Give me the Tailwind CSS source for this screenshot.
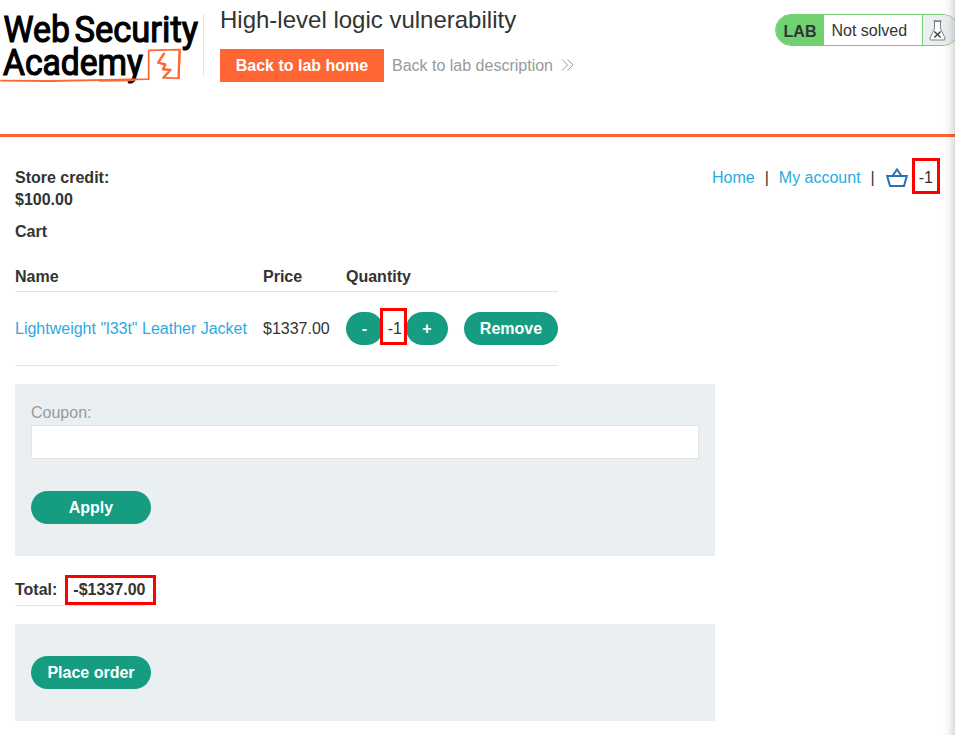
<!DOCTYPE html>
<html lang="en">
<head>
<meta charset="utf-8">
<title>High-level logic vulnerability</title>
<script src="https://cdn.jsdelivr.net/npm/@tailwindcss/browser@4"></script>
</head>
<body class="relative h-[735px] w-[955px] overflow-hidden bg-white font-['Liberation_Sans',Arial,sans-serif] text-base leading-[22px] text-[#333332]">
<header class="flex h-[137px] items-start border-b-[3px] border-[#ff6633]">
  <svg class="block h-[90px] w-[203px] shrink-0 overflow-visible" viewBox="0 0 203 90" role="img" aria-label="Web Security Academy">
    <g font-family="Roboto, sans-serif" font-weight="400" font-size="37.500" fill="#000" stroke="#000" stroke-width="1.200">
      <text x="3.500" y="42.300" textLength="66.500" lengthAdjust="spacingAndGlyphs">Web</text>
      <text x="74.500" y="42.300" textLength="123.500" lengthAdjust="spacingAndGlyphs">Security</text>
      <text x="3" y="74.500" font-size="36" textLength="140" lengthAdjust="spacingAndGlyphs">Academy</text>
    </g>
    <g fill="none" stroke="#ff6633" stroke-linejoin="round" stroke-linecap="round" stroke-width="1.800">
      <path d="M1 80.600L50 81L148.700 79.200L148.700 50.300L180 49.700L178.700 78.300L163.300 77.700"/>
      <path d="M179.500 50L178.500 78" stroke-width="2.200"/>
      <path d="M164 53.700L158.200 62.700L165.300 64.500L163 69.300L170.500 70L163.300 77.700" stroke-width="2.400"/>
      <path d="M100 80.500L133 80" stroke-width="2.600"/>
    </g>
  </svg>
  <div class="mt-3.5 h-[62px] w-px shrink-0 bg-[#e4e4e4]"></div>
  <div class="ml-4 flex-1 pt-1.5">
    <h1 class="text-2xl leading-7">High-level logic vulnerability</h1>
    <div class="mt-[15px] flex items-center">
      <a class="flex h-[33px] w-[164px] items-center justify-center bg-[#ff6633] font-bold text-white">Back to lab home</a>
      <a class="ml-2 flex items-center text-[#999]">Back to lab description
        <svg class="mb-px ml-2 h-3 w-3.5" viewBox="0 0 14 12" fill="none" stroke="#999" stroke-width="1"><path d="M1 .5L6.500 6L1 11.500M6.500 .5L12 6L6.500 11.500"/></svg>
      </a>
    </div>
  </div>
  <div class="-mr-1 mt-3.5 flex h-8 w-[184px] shrink-0 overflow-hidden rounded-full border border-[#6fd16f] bg-white">
    <div class="flex w-12 shrink-0 items-center justify-center bg-[#6fd16f] pt-[3px] font-bold">LAB</div>
    <div class="flex w-[99px] shrink-0 items-center border-r border-[#6fd16f] pl-[7.5px] pt-0.5">Not solved</div>
    <div class="flex flex-1 items-center bg-[#eaeff2] pl-1.5">
      <svg class="h-[21px] w-[17px] shrink-0" viewBox="0 0 17 21" fill="#fff" stroke="#808080" stroke-width="1"><path d="M5.500 1.500V8.500L1 18Q.5 20 2 20H15Q16.500 20 16 18L11.500 8.500V1.500Z"/><path d="M4.500 1H12.500" stroke-width="1.300"/><path d="M5.300 11.500L11.700 17.500M11.700 11.500L5.300 17.500" stroke="#444" stroke-width="1.600"/></svg>
    </div>
  </div>
</header>
<main class="px-[15px] pt-[30px]">
  <div class="flex items-start justify-between">
    <p class="w-28 font-bold">Store credit:<br>$100.00</p>
    <nav class="flex items-center pr-[7px]">
      <a class="text-[#29abe2]">Home</a><span class="ml-2.5">|</span>
      <a class="ml-2.5 text-[#29abe2]">My account</a><span class="ml-2.5">|</span>
      <svg class="ml-[11px] h-5 w-[22px]" viewBox="0 0 22 20" fill="none" stroke="#2b70b5" stroke-width="2"><path d="M1.200 8H20.800L18 18H4Z"/><path d="M6.500 8L11 1.500L15.500 8"/></svg>
      <span class="relative ml-[11px]">-1<span class="absolute -left-[7px] -top-[9px] h-[35.5px] w-7 border-3 border-[#ff0000]"></span></span>
    </nav>
  </div>
  <h2 class="mt-2.5 font-bold">Cart</h2>
  <section class="mt-[23px] w-[543px]">
    <div class="grid h-[26px] grid-cols-[232px_67px_212px] gap-x-4 border-b border-[#e4e4e4] font-bold">
      <div>Name</div><div>Price</div><div>Quantity</div>
    </div>
    <div class="grid h-[74px] grid-cols-[232px_67px_212px] items-center gap-x-4 border-b border-[#e4e4e4]">
      <a class="whitespace-nowrap text-[#29abe2]">Lightweight "l33t" Leather Jacket</a>
      <div>$1337.00</div>
      <div class="flex items-center">
        <button class="h-[33px] w-[37px] rounded-full bg-[#169c80] font-bold text-white">-</button>
        <span class="relative ml-[4.7px] w-[15px]">-1<span class="absolute -left-[7.7px] -top-2.5 h-[37px] w-[27px] border-3 border-[#ff0000]"></span></span>
        <button class="ml-[3.3px] h-[33px] w-[42px] rounded-full bg-[#169c80] font-bold text-white">+</button>
        <button class="ml-4 h-[33px] w-[94px] rounded-full bg-[#169c80] font-bold text-white">Remove</button>
      </div>
    </div>
  </section>
  <form class="mt-[18px] h-[172px] w-[700px] bg-[#eaeff2] px-4 pt-[18px]">
    <label class="block text-[#999]">Coupon:</label>
    <input class="mt-px block h-[34px] w-full border border-[#e4e4e4] bg-white">
    <button type="button" class="mt-8 h-[33px] w-[120px] rounded-full bg-[#169c80] font-bold text-white">Apply</button>
  </form>
  <div class="mt-[23px] flex h-[27px] w-[130px] gap-4 border-b border-[#e4e4e4] font-bold">
    <span>Total:</span><span class="relative">-$1337.00<span class="absolute -left-[8px] -top-1 h-[30px] w-[91px] border-3 border-[#ff0000]"></span></span>
  </div>
  <div class="mt-[18px] h-[97px] w-[700px] bg-[#eaeff2] px-4 pt-8">
    <button class="block h-[33px] w-[120px] rounded-full bg-[#169c80] font-bold text-white">Place order</button>
  </div>
</main>
<div class="absolute inset-y-0 right-0 w-3 bg-linear-to-r from-black/0 via-black/4 to-black/14"></div>
</body>
</html>
